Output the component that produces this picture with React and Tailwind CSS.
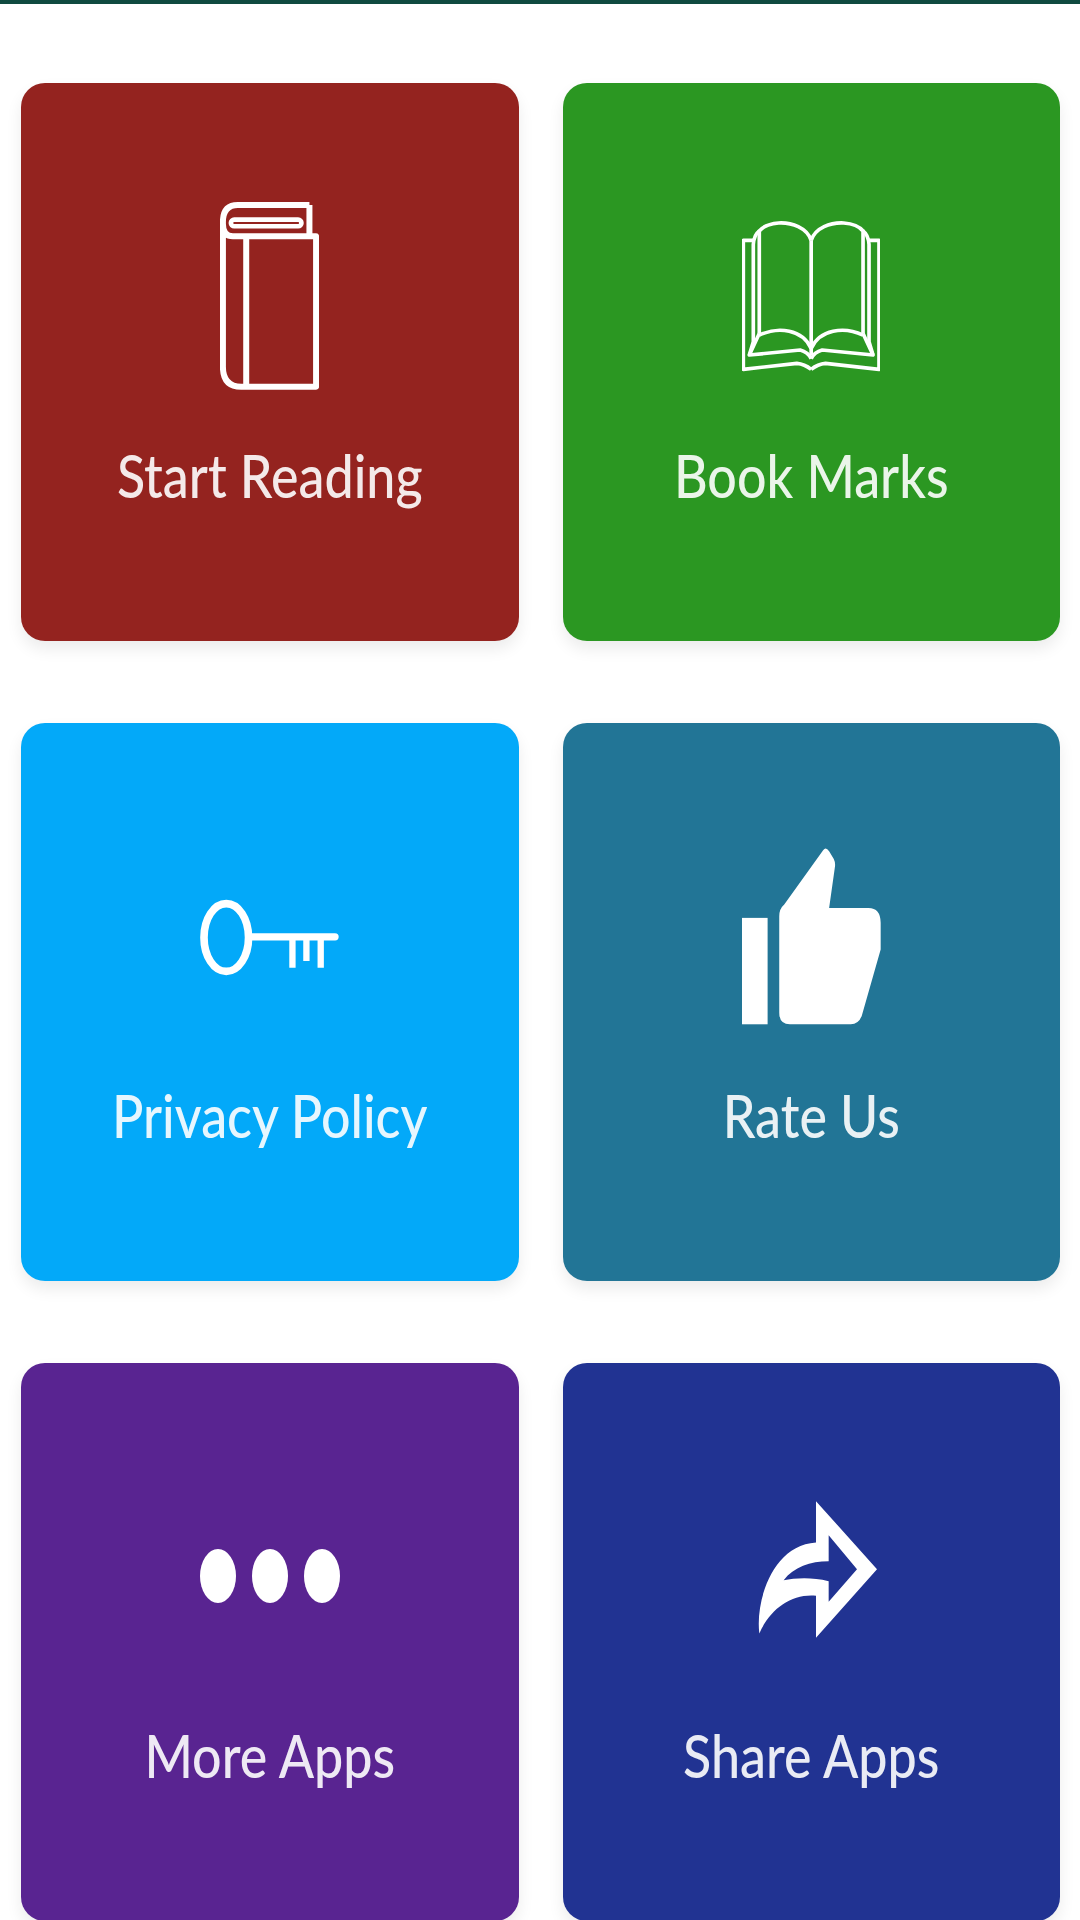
import React from "react";

// Closed book, spine on the left
function ClosedBookIcon() {
  return (
    <svg width="99" height="188" viewBox="62 35 296 565" fill="none" stroke="#fff" strokeWidth="18" strokeLinejoin="round">
      <path d="M330 44H115Q70 44 70 95V530Q70 590 125 590H350V138H100Q70 138 70 100" />
      <path d="M330 44V138" />
      <path d="M140 145V590" />
      <rect x="94" y="88" width="212" height="20" rx="10" strokeWidth="14" />
    </svg>
  );
}

// One half of the open book, drawn twice and mirrored round the spine
function OpenBookHalf({ flip }) {
  return (
    <g transform={flip ? "translate(496 0) scale(-1 1)" : undefined}>
      <path d="M248 100C235 62 190 46 150 48C125 50 105 56 92 72V380" />
      <path d="M92 72Q76 84 74 112V405L62 445" />
      <path d="M78 100H44V488L205 470Q228 472 248 488" />
      <path d="M92 380L62 445L215 430Q238 436 248 456" />
      <path d="M92 385C150 358 222 368 248 425" />
    </g>
  );
}

function OpenBookIcon() {
  return (
    <svg width="138" height="152" viewBox="40 40 415 455" fill="none" stroke="#fff" strokeWidth="11" strokeLinejoin="round">
      <OpenBookHalf />
      <OpenBookHalf flip />
      <path d="M248 100V445" />
    </svg>
  );
}

function KeyIcon() {
  return (
    <svg className="mt-[2px]" width="139" height="77" viewBox="62 52 418 230" fill="none" stroke="#fff" strokeLinecap="round">
      <ellipse cx="141" cy="167" rx="67" ry="102" strokeWidth="23" />
      <path d="M215 165H468" strokeWidth="22" />
      <path d="M340 165V258M382 165V238M425 165V258" strokeWidth="19" strokeLinecap="butt" />
    </svg>
  );
}

function ThumbIcon() {
  return (
    <svg width="139" height="177" viewBox="38 35 418 532" fill="#fff">
      <rect x="38" y="245" width="77" height="320" />
      <path d="M282 42Q290 30 300 45L314 68Q320 80 317 95L300 215H418Q455 215 455 260V340L398 540Q388 565 365 565H182Q150 565 150 530V240Q150 218 165 205Z" />
    </svg>
  );
}

function DotsIcon() {
  return (
    <div className="flex gap-[16px]">
      <span className="block w-[36px] h-[54px] rounded-[50%] bg-white" />
      <span className="block w-[36px] h-[54px] rounded-[50%] bg-white" />
      <span className="block w-[36px] h-[54px] rounded-[50%] bg-white" />
    </div>
  );
}

function ShareIcon() {
  return (
    <svg className="ml-[14px] mb-[14px]" width="120" height="137" viewBox="58 28 360 410" fill="#fff" fillRule="evenodd">
      <path d="M232 28L415 232L232 438V312C160 305 95 350 62 425C50 330 100 160 232 152ZM270 130V208C215 208 165 225 135 265C170 258 220 255 270 268V330L355 232Z" />
    </svg>
  );
}

const cards = [
  { label: "Start Reading", bg: "bg-[#94231f]", icon: <ClosedBookIcon /> },
  { label: "Book Marks", bg: "bg-[#2b9722]", icon: <OpenBookIcon /> },
  { label: "Privacy Policy", bg: "bg-[#03a9f9]", icon: <KeyIcon /> },
  { label: "Rate Us", bg: "bg-[#227596]", icon: <ThumbIcon /> },
  { label: "More Apps", bg: "bg-[#592491]", icon: <DotsIcon /> },
  { label: "Share Apps", bg: "bg-[#213392]", icon: <ShareIcon /> },
];

export default function App() {
  return (
    <div className="w-[1080px] h-[1920px] overflow-hidden bg-white font-['Lato',sans-serif]">
      <div className="h-[4px] bg-[#0f4a40]" />
      <div className="grid grid-cols-2 gap-x-[44px] gap-y-[82px] pl-[21px] pr-[20px] pt-[79px]">
        {cards.map((card) => (
          <div
            key={card.label}
            className={`${card.bg} h-[558px] rounded-[24px] shadow-[0_8px_16px_rgba(0,0,0,0.08)] flex flex-col items-center pt-[83px]`}
          >
            <div className="h-[260px] flex items-center justify-center">{card.icon}</div>
            <span className="mt-[21px] text-[52px] leading-[56px] font-medium text-white/90 scale-y-[1.16]">
              {card.label}
            </span>
          </div>
        ))}
      </div>
    </div>
  );
}
